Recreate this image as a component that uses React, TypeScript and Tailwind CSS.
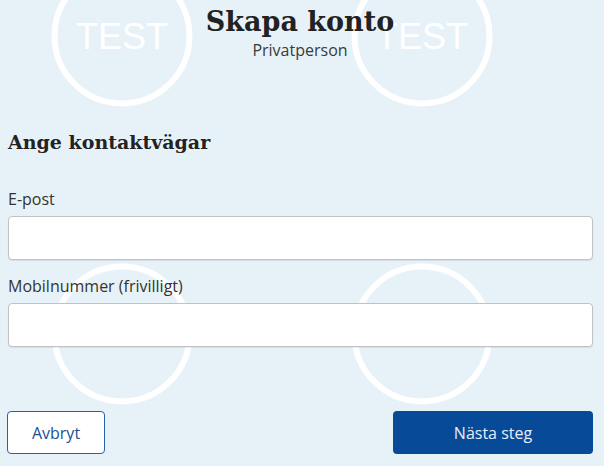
import React from 'react';

const sans = { fontFamily: '"Open Sans", "Noto Sans", sans-serif' };

const Watermark = () => {
  const spots = [
    [122, 36],
    [422, 36],
    [122, 334],
    [422, 334],
  ];
  return (
    <svg className="pointer-events-none absolute inset-0 h-full w-full" aria-hidden="true">
      {spots.map(([cx, cy]) => (
        <g key={`${cx}-${cy}`}>
          <circle cx={cx} cy={cy} r={67.5} fill="none" stroke="#ffffff" strokeWidth={6} />
          <text
            x={cx}
            y={cy + 13}
            textAnchor="middle"
            fill="#ffffff"
            fontSize={36}
            fontFamily='"Liberation Sans", Arial, sans-serif'
          >
            TEST
          </text>
        </g>
      ))}
    </svg>
  );
};

const Field = ({ label, type }: { label: string; type: string }) => (
  <label className="flex flex-col">
    <span className="text-[16px] leading-[22px] text-[#36322e]" style={sans}>
      {label}
    </span>
    <input
      type={type}
      className="mt-[6px] h-[44px] w-full rounded-[4px] border border-[#c2c2c2] bg-white px-3 shadow-[0_1px_1px_rgba(0,0,0,0.08)] outline-none"
    />
  </label>
);

export default function App() {
  return (
    <div className="relative min-h-screen overflow-hidden bg-[#e7f2f8]">
      <Watermark />
      <div className="relative flex flex-col pl-[7px] pr-[11px]">
        <div className="flex flex-col items-center pt-[4px]">
          <h1
            className="text-[27px] font-bold leading-[36px] text-[#222222]"
            style={{ fontFamily: '"DejaVu Serif", serif' }}
          >
            Skapa konto
          </h1>
          <p className="text-[16px] leading-[20px] text-[#3a3a3a]" style={sans}>
            Privatperson
          </p>
        </div>

        <h2
          className="mt-[69px] pl-[1px] text-[19px] font-bold leading-[26px] text-[#222222]"
          style={{ fontFamily: '"DejaVu Serif", serif' }}
        >
          Ange kontaktvägar
        </h2>

        <div className="mt-[33px] flex flex-col gap-[15px] pl-[1px]">
          <Field label="E-post" type="email" />
          <Field label="Mobilnummer (frivilligt)" type="tel" />
        </div>

        <div className="mt-[64px] flex items-center justify-between">
          <button
            className="h-[43px] w-[98px] rounded-[4px] border border-[#2b5fa8] bg-white text-[16px] text-[#1d4f91]"
            style={sans}
          >
            Avbryt
          </button>
          <button
            className="h-[43px] w-[200px] rounded-[4px] bg-[#074a98] text-[16px] text-[#e8eef6]"
            style={sans}
          >
            Nästa steg
          </button>
        </div>
      </div>
    </div>
  );
}
